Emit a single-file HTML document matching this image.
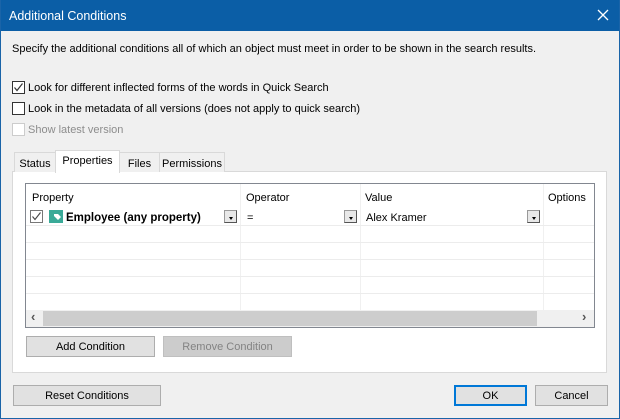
<!DOCTYPE html>
<html><head><style>
*{margin:0;padding:0;box-sizing:border-box}
body{width:620px;height:419px;overflow:hidden;background:#f0f0f0;font-family:"Liberation Sans",sans-serif;font-size:11px;color:#000;position:relative}
.a{position:absolute}
.win{left:0;top:0;width:620px;height:419px;border:1px solid #1a64a8;border-top:none}
.title{left:0;top:0;width:620px;height:31px;background:#0b5ea6;color:#fff;font-size:12.5px;padding:9px 0 0 9px}
.cb{width:13px;height:13px;border:1px solid #333;background:#fff}
.btn{background:#e1e1e1;border:1px solid #adadad;text-align:center;line-height:21px}
.tab{background:#f0f0f0;border:1px solid #d9d9d9;border-bottom:none;height:20px;text-align:center;line-height:22px}
.hl{height:1px;background:#ececec}
.vl{width:1px;background:#ececec}
.dd{width:13px;height:13px;background:#e8e8e8;border:1px solid #999;border-right-color:#555;border-bottom-color:#555}
.dd:after{content:"";position:absolute;left:4px;top:6px;border-left:2px solid transparent;border-right:2px solid transparent;border-top:3px solid #000}
</style></head><body>
<div class="a title">Additional Conditions</div>
<svg class="a" style="left:597px;top:9px" width="12" height="12"><path d="M1 1L11 11M11 1L1 11" stroke="#fff" stroke-width="1.3"/></svg>
<div class="a win"></div>
<div class="a" style="left:12px;top:43px">Specify the additional conditions all of which an object must meet in order to be shown in the search results.</div>
<div class="a cb" style="left:12px;top:81px"></div>
<svg class="a" style="left:13px;top:82px" width="11" height="11"><path d="M1.5 5.5L4 8.5L9.5 1.5" stroke="#333" stroke-width="1.2" fill="none"/></svg>
<div class="a" style="left:28px;top:82px">Look for different inflected forms of the words in Quick Search</div>
<div class="a cb" style="left:12px;top:102px"></div>
<div class="a" style="left:28px;top:103px">Look in the metadata of all versions (does not apply to quick search)</div>
<div class="a cb" style="left:12px;top:123px;border-color:#ccc"></div>
<div class="a" style="left:28px;top:124px;color:#8d8d8d">Show latest version</div>
<div class="a" style="left:12px;top:171px;width:595px;height:202px;background:#fff;border:1px solid #d9d9d9"></div>
<div class="a tab" style="left:14px;top:152px;width:42px">Status</div>
<div class="a tab" style="left:119px;top:152px;width:41px">Files</div>
<div class="a tab" style="left:159px;top:152px;width:66px">Permissions</div>
<div class="a tab" style="left:55px;top:150px;width:65px;height:23px;background:#fff;line-height:20px">Properties</div>
<div class="a" style="left:25px;top:183px;width:570px;height:145px;border:1px solid #828790;background:#fff"></div>
<div class="a vl" style="left:240px;top:184px;height:126px;background:#f0f0f0"></div>
<div class="a vl" style="left:360px;top:184px;height:126px;background:#f0f0f0"></div>
<div class="a vl" style="left:543px;top:184px;height:126px;background:#f0f0f0"></div>
<div class="a hl" style="left:26px;top:225px;width:568px"></div>
<div class="a hl" style="left:26px;top:242px;width:568px"></div>
<div class="a hl" style="left:26px;top:259px;width:568px"></div>
<div class="a hl" style="left:26px;top:276px;width:568px"></div>
<div class="a hl" style="left:26px;top:293px;width:568px"></div>
<div class="a" style="left:32px;top:192px">Property</div>
<div class="a" style="left:246px;top:192px">Operator</div>
<div class="a" style="left:365px;top:192px">Value</div>
<div class="a" style="left:548px;top:192px">Options</div>
<div class="a" style="left:30px;top:210px;width:13px;height:13px;border:1px solid #777;background:#fff"></div>
<svg class="a" style="left:31px;top:211px" width="11" height="11"><path d="M1.5 5.5L4 8.5L9.5 1.5" stroke="#444" stroke-width="1.1" fill="none"/></svg>
<svg class="a" style="left:49px;top:210px" width="14" height="13"><rect width="14" height="13" fill="#3aaa98"/><path d="M5 4h4l3 3-3 3-4-4z" fill="#fff"/></svg>
<div class="a" style="left:66px;top:212px;font-weight:bold;font-size:11.5px">Employee (any property)</div>
<div class="a dd" style="left:224px;top:210px"></div>
<div class="a" style="left:247px;top:212px">=</div>
<div class="a dd" style="left:344px;top:210px"></div>
<div class="a" style="left:366px;top:212px">Alex Kramer</div>
<div class="a dd" style="left:527px;top:210px"></div>
<div class="a" style="left:26px;top:310px;width:568px;height:17px;background:#f0f0f0"></div>
<div class="a" style="left:43px;top:311px;width:494px;height:15px;background:#cdcdcd"></div>
<div class="a" style="left:31px;top:309px;font-size:13px;font-weight:bold;color:#555">&lsaquo;</div>
<div class="a" style="left:582px;top:309px;font-size:13px;font-weight:bold;color:#555">&rsaquo;</div>
<div class="a btn" style="left:26px;top:336px;width:129px;height:21px">Add Condition</div>
<div class="a btn" style="left:163px;top:336px;width:129px;height:21px;background:#ccc;border-color:#bfbfbf;color:#838383">Remove Condition</div>
<div class="a btn" style="left:13px;top:385px;width:148px;height:21px">Reset Conditions</div>
<div class="a btn" style="left:454px;top:385px;width:73px;height:21px;border:2px solid #0078d7;line-height:19px">OK</div>
<div class="a btn" style="left:535px;top:385px;width:73px;height:21px">Cancel</div>
</body></html>
